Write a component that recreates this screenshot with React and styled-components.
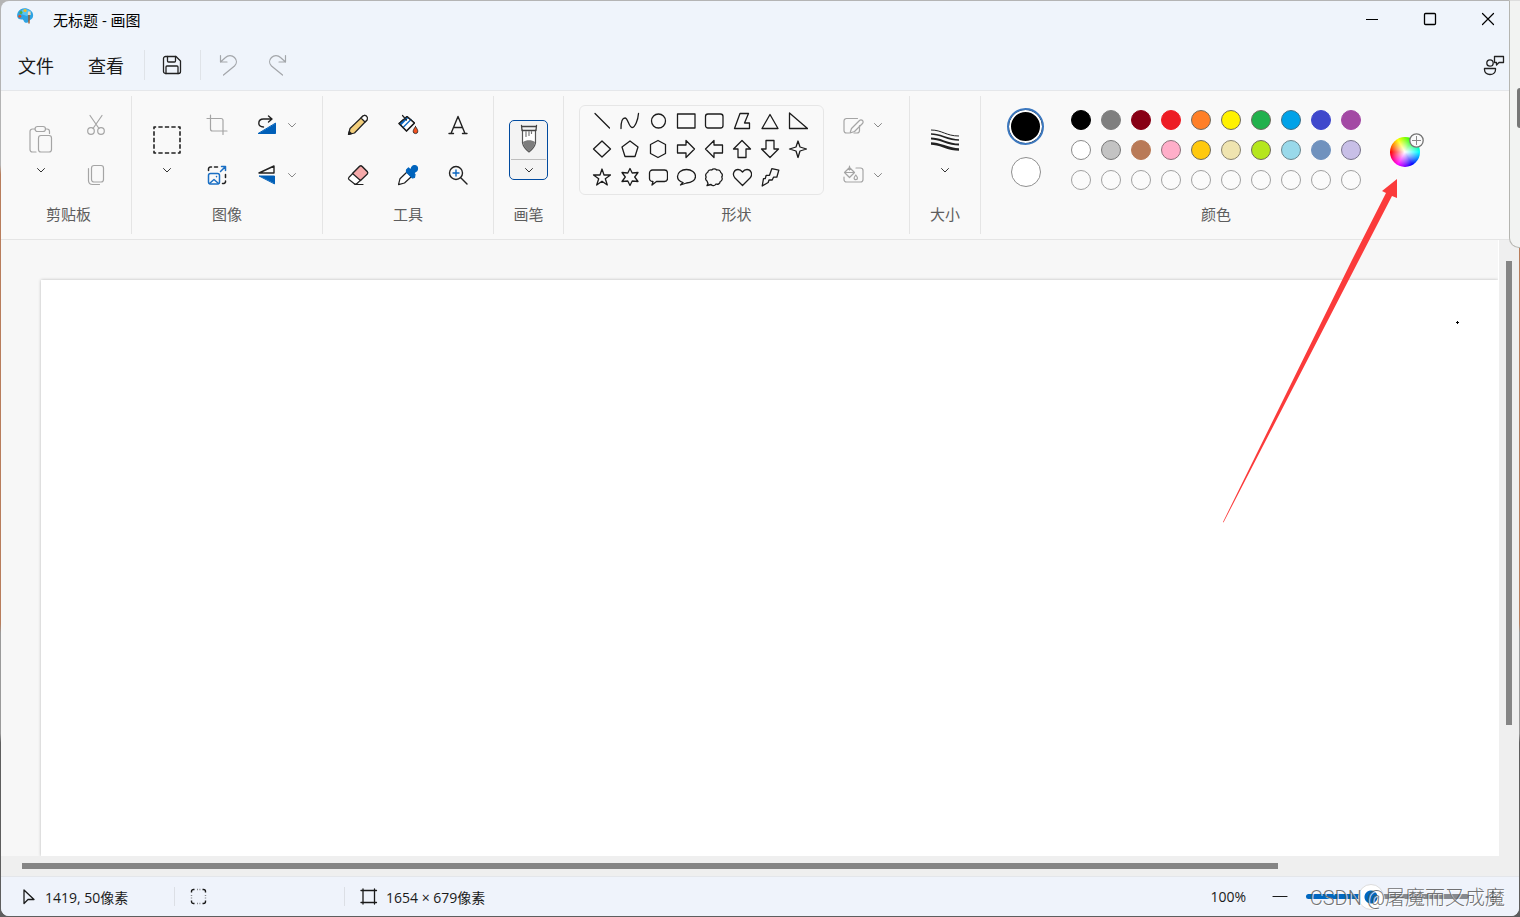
import { useState } from "react";
import styled, { createGlobalStyle } from "styled-components";

const GlobalStyle = createGlobalStyle`
  * {
    box-sizing: border-box;
  }
  body {
    margin: 0;
    overflow: hidden;
    font-family: "Open Sans", "Noto Sans CJK SC", sans-serif;
    color: #1a1a1a;
  }
  button {
    margin: 0;
    padding: 0;
    border: 0;
    background: none;
    color: inherit;
    font: inherit;
  }
`;

// What shows of the desktop around the window
const Desktop = styled.div`
  position: relative;
  display: flex;
  height: 100vh;
  padding: 1px;
  overflow: hidden;
  background: linear-gradient(
    #b4b4b4 0 18%,
    #b87d5c 19% 68%,
    #9a9a9a 69% 80%,
    #5e5e5e 81%
  );
`;

const Window = styled.div`
  flex: 1;
  min-width: 0;
  display: flex;
  flex-direction: column;
  border-radius: 8px;
  overflow: hidden;
  background: #eff4fb;
`;

// Title bar
const TitleBar = styled.header`
  display: flex;
  height: 40px;
  padding: 0 2px 0 15px;
`;

const Logo = styled.svg`
  width: 18px;
  height: 18px;
  margin-top: 6px;
`;

const Title = styled.h1`
  flex: 1;
  margin: 0 0 0 19px;
  font-size: 15px;
  font-weight: 400;
  line-height: 38px;
  color: #000;
`;

const WindowButton = styled.button`
  display: grid;
  place-items: center;
  width: 58px;
  height: 36px;
  color: #000;
`;

// Menu bar
const MenuBar = styled.nav`
  display: flex;
  align-items: center;
  height: 49px;
  padding: 0 1px 2px 0;
`;

const MenuButton = styled.button`
  width: 70px;
  height: 36px;
  font-size: 18px;
`;

const MenuDivider = styled.span`
  width: 1px;
  height: 30px;
  margin: 0 2px 0 3px;
  background: #dfe3e8;
`;

const QuickButton = styled.button`
  display: grid;
  place-items: center;
  width: 50px;
  height: 36px;
  color: ${(props) => (props.disabled ? "#a3a6aa" : "#222")};
`;

const Spacer = styled.span`
  flex: 1;
`;

// Ribbon
const Ribbon = styled.section`
  display: flex;
  height: 150px;
  padding: 5px;
  border-top: 1px solid #e5e7ea;
  border-bottom: 1px solid #e5e5e5;
  background: #f9f9f9;
`;

const Group = styled.div`
  display: flex;
  flex-direction: column;
  flex: none;
  width: ${(props) => props.$width}px;
  padding-bottom: 10px;
  border-right: ${(props) => (props.$last ? "0" : "1px solid #e5e5e5")};
`;

const GroupBody = styled.div`
  flex: 1;
  display: flex;
  align-items: center;
  justify-content: ${(props) => props.$justify || "center"};
  gap: ${(props) => props.$gap || 0}px;
  padding: 0 ${(props) => props.$pad || 0}px;
`;

const GroupLabel = styled.h2`
  margin: 0;
  font-size: 15px;
  font-weight: 400;
  line-height: 20px;
  text-align: center;
  color: #5d5d5d;
`;

const ToolGrid = styled.div`
  display: grid;
  grid-template-columns: repeat(${(props) => props.$columns}, auto);
  grid-auto-rows: 50px;
`;

const ToolButton = styled.button`
  display: grid;
  place-items: center;
  width: ${(props) => props.$width || 50}px;
  color: ${(props) => (props.disabled ? "#a5a5a5" : "#222")};
`;

const TallButton = styled.button`
  display: flex;
  flex-direction: column;
  align-items: center;
  gap: 8px;
  width: ${(props) => props.$width || 50}px;
  height: 100px;
  padding-top: 24px;
  color: ${(props) => (props.disabled ? "#a5a5a5" : "#222")};
`;

const SplitButton = styled.button`
  display: flex;
  align-items: center;
  gap: 7px;
  width: 70px;
  padding-left: 13px;
  color: ${(props) => (props.disabled ? "#a5a5a5" : "#222")};
`;

const BrushButton = styled.button`
  display: flex;
  flex-direction: column;
  align-items: center;
  justify-content: space-between;
  width: 39px;
  height: 60px;
  padding: 3px 1px;
  border: 1px solid #004a9f;
  border-radius: 5px;
  background: #f3f3f3;
`;

const BrushLine = styled.span`
  width: 100%;
  height: 1px;
  background: #bdbdbd;
`;

const ShapeBox = styled.div`
  display: grid;
  flex: none;
  grid-template-columns: repeat(8, 28px);
  grid-auto-rows: 28px;
  width: 245px;
  height: 90px;
  padding: 1px 8px;
  border: 1px solid #e6e6e6;
  border-radius: 6px;
`;

const ShapeButton = styled.button`
  display: grid;
  place-items: center;
  color: #1c1c1c;
`;

// Colours
const ActiveColors = styled.div`
  display: flex;
  flex-direction: column;
  align-items: center;
  gap: 12px;
  width: 37px;
  margin-right: 22px;
  padding-bottom: 5px;
`;

const PrimaryColor = styled.button`
  width: 37px;
  height: 37px;
  border: 2px solid #3c78bf;
  border-radius: 50%;
  background: #000;
  box-shadow: inset 0 0 0 2px #fff;
`;

const SecondaryColor = styled.button`
  width: 30px;
  height: 30px;
  border: 1px solid #8f8f8f;
  border-radius: 50%;
  background: #fff;
`;

const Palette = styled.div`
  display: grid;
  grid-template-columns: repeat(10, 30px);
  grid-auto-rows: 30px;
  place-items: center;
`;

const Swatch = styled.button`
  width: 20px;
  height: 20px;
  border: 1px solid ${(props) => props.$edge};
  border-radius: 50%;
  background: ${(props) => props.$color};
`;

const WheelButton = styled.button`
  position: relative;
  width: 34px;
  height: 34px;
  margin-left: 24px;
`;

const Wheel = styled.span`
  display: block;
  width: 30px;
  height: 30px;
  margin-top: 4px;
  border-radius: 50%;
  background:
    radial-gradient(circle, #fff, rgba(255, 255, 255, 0) 68%),
    conic-gradient(from 270deg, #f00, #ff0, #0f0, #0ff, #00f, #f0f, #f00);
`;

const WheelPlus = styled.svg`
  position: absolute;
  top: 0;
  right: 0;
  width: 15px;
  height: 15px;
`;

// Drawing area
const Workspace = styled.main`
  flex: 1;
  min-height: 0;
  display: grid;
  grid-template: 1fr 20px / 1fr 20px;
  background: #efefef;
`;

const Viewport = styled.div`
  display: flex;
  padding: 40px 0 0 40px;
  border-right: 1px solid #fff;
  overflow: hidden;
  background: #f7f7f7;
`;

const Paper = styled.div`
  position: relative;
  flex: 1;
  background: #fff;
  box-shadow: 0 0 3px rgba(0, 0, 0, 0.25);
`;

const PixelMark = styled.svg`
  position: absolute;
  top: 41px;
  right: 39px;
  width: 3px;
  height: 3px;
`;

const VerticalBar = styled.div`
  display: flex;
  justify-content: center;
  padding-top: 21px;
`;

const HorizontalBar = styled.div`
  display: flex;
  align-items: center;
  grid-column: 1 / -1;
  padding: 0 2px 0 21px;
`;

const VerticalThumb = styled.span`
  width: 6px;
  height: 78%;
  background: #858585;
`;

const HorizontalThumb = styled.span`
  width: 84%;
  height: 6px;
  background: #858585;
`;

// Status bar
const StatusBar = styled.footer`
  display: flex;
  align-items: center;
  height: 40px;
  border-top: 1px solid #e4e6ea;
  background: #eff3fb;
  font-size: 14px;
`;

const StatusItem = styled.div`
  display: flex;
  align-items: center;
  gap: 8px;
  width: ${(props) => props.$width}px;
  height: 19px;
  padding-left: ${(props) => props.$pad}px;
  border-right: ${(props) => (props.$last ? "0" : "1px solid #dcdfe5")};
  white-space: nowrap;
`;

const ZoomArea = styled.div`
  display: flex;
  align-items: center;
  margin-left: auto;
  padding-right: 14px;
`;

const ZoomButton = styled.button`
  display: grid;
  place-items: center;
  width: 24px;
  height: 30px;
`;

const ZoomValue = styled.output`
  margin-right: 22px;
`;

const ZoomSlider = styled.input`
  width: 163px;
  height: 26px;
  margin: 0 12px 0 14px;
  appearance: none;
  background: none;

  &::-webkit-slider-runnable-track {
    height: 5px;
    border-radius: 3px;
    background: linear-gradient(90deg, #0067c0 38%, #868a90 38%);
  }
  &::-webkit-slider-thumb {
    appearance: none;
    width: 26px;
    height: 26px;
    margin-top: -10px;
    border: 1px solid #dcdcdc;
    border-radius: 50%;
    background: radial-gradient(circle, #0067c0 6px, #fff 7px);
  }
`;

// Things lying over the window
const BackWindow = styled.aside`
  position: absolute;
  top: 0;
  right: -10px;
  width: 21px;
  height: 248px;
  border: 1px solid #b5b5b0;
  border-top-color: #ddd;
  border-radius: 0 0 0 10px;
  background: #f2f3f2;
`;

const BackScroll = styled.span`
  display: block;
  width: 6px;
  height: 40px;
  margin: 87px 0 0 7px;
  border-radius: 3px;
  background: #777;
`;

const Pointer = styled.svg`
  position: absolute;
  top: 178px;
  right: 122px;
  width: 176px;
  height: 346px;
  pointer-events: none;
`;

const Watermark = styled.div`
  position: absolute;
  right: 15px;
  bottom: 4px;
  font-family: Roboto, "Noto Sans CJK SC", sans-serif;
  font-size: 20px;
  font-weight: 300;
  line-height: 30px;
  color: rgba(90, 90, 90, 0.85);
  text-shadow: 1px 1px 0 rgba(255, 255, 255, 0.8);
  pointer-events: none;
`;

const Svg = styled.svg`
  display: block;
  flex: none;
  fill: none;
  stroke: ${(props) => props.$tone};
  stroke-linecap: round;
  stroke-linejoin: round;
`;

function Icon({ w = 24, h = 24, line = 1.2, tone = "currentColor", children }) {
  return (
    <Svg width={w} height={h} viewBox={`0 0 ${w} ${h}`} strokeWidth={line} $tone={tone} aria-hidden="true">
      {children}
    </Svg>
  );
}

const Chevron = ({ tone = "#333" }) => (
  <Icon w={12} h={12} line={1} tone={tone}>
    <path d="M2.5 4.5 6 8l3.5-3.5" />
  </Icon>
);

const shapes = [
  ["直线", <path d="M3 2.5l14.500 14.500" />],
  ["曲线", <path d="M1 17.5C1 11 2 7 5 7s4 9.500 7 9.500S18 9 18.500 2.500" />],
  ["椭圆形", <circle cx="10.5" cy="10" r="7" />],
  ["矩形", <path d="M1.5 3H19v14H1.5z" />],
  ["圆角矩形", <rect x="1.5" y="3" width="17.5" height="14" rx="2.5" />],
  ["多边形", <path d="M8 2.5h8.500L12.500 12h5v5.500h-15z" />],
  ["三角形", <path d="M10 3.500l8 14H2z" />],
  ["直角三角形", <path d="M1.500 2v15.500h18z" />],
  ["菱形", <path d="M10 2l8.500 8-8.500 8-8.500-8z" />],
  ["五边形", <path d="M10 2l8 6-3 9.500H5L2 8z" />],
  ["六边形", <path d="M10 1.500l7.500 4v9l-7.500 4-7.500-4v-9z" />],
  ["右箭头", <path d="M1.500 6H10V1.500l8.500 8.500-8.500 8.500V14H1.500z" />],
  ["左箭头", <path d="M18.500 6H10V1.500L1.500 10l8.500 8.500V14h8.500z" />],
  ["向上箭头", <path d="M6 18.500V10H1.500L10 1.500l8.500 8.500H14v8.500z" />],
  ["向下箭头", <path d="M6 1.500V10H1.500l8.500 8.500 8.500-8.500H14V1.500z" />],
  ["四角星", <path d="M10 2l2 6 6.500 2-6.500 2-2 6.500L8 12l-6.500-2L8 8z" />],
  ["五角星", <path d="M10 2l2 6h6.500l-5.200 3.700 2 6.300L10 14.200 4.700 18l2-6.300L1.500 8H8z" />],
  ["六角星", <path d="M10 1.500L12.200 6l5.800-.5-3.300 4.500 3.300 4.500-5.800-.5-2.200 4.500L7.800 14l-5.800.5L5.300 10 2 5.500l5.800.5z" />],
  ["圆角矩形标注", <path d="M4.500 3h12a3 3 0 013 3v5.500a3 3 0 01-3 3h-8L4 18l1-3.500h-.500a3 3 0 01-3-3V6a3 3 0 013-3z" />],
  ["椭圆形标注", <path d="M7 15.500c-3-1-5.500-3-5.500-6 0-4 4-7 9-7s9 3 9 6.800-4 6.700-9 6.700l-6 2z" />],
  [
    "云形标注",
    <path d="M3 14a3 3 0 01-.8-4 3 3 0 011.500-4.500 3 3 0 014-2.500 3.200 3.200 0 015 0 3 3 0 014 2.500 3 3 0 011 4.500 3 3 0 01-1.500 4.500 3 3 0 01-4.200 2.500 3 3 0 01-5 .5L3 18.500l1-2z" />,
  ],
  ["心形", <path d="M10.500 18.500L3 11C-.500 7 2.500 2.500 6 2.500c2 0 3.500 1.200 4.500 2.500 1-1.300 2.500-2.500 4.500-2.500 3.500 0 6.500 4.500 3 8.500z" />],
  ["闪电形", <path d="M11.800 1.700l7 1.500-2 7h-3.300L12.200 13H9l-.8 2.500-6 3.500 1.300-7.300h1.700l1-3.400h3.300z" />],
];

// [name, colour, edge]
const dark = "#6f6a5e";
const palette = [
  ["黑色", "#000000", "#000000"],
  ["灰色-50%", "#7f7f7f", "#7f7f7f"],
  ["深红色", "#880015", "#880015"],
  ["红色", "#ed1c24", "#ed1c24"],
  ["橙色", "#ff7f27", dark],
  ["黄色", "#fff200", dark],
  ["绿色", "#22b14c", dark],
  ["青绿色", "#00a2e8", "#3f6f86"],
  ["靛青色", "#3f48cc", "#3f48cc"],
  ["紫色", "#a349a4", "#a349a4"],
  ["白色", "#ffffff", "#8a8a8a"],
  ["灰色-25%", "#c3c3c3", "#777777"],
  ["褐色", "#b97a57", "#b97a57"],
  ["玫瑰色", "#ffaec9", "#8b7078"],
  ["金色", "#ffc90e", dark],
  ["浅黄色", "#efe4b0", "#88836f"],
  ["酸橙色", "#b5e61d", dark],
  ["淡青绿色", "#99d9ea", "#6b868d"],
  ["蓝灰色", "#7092be", "#7092be"],
  ["淡紫色", "#c8bfe7", "#77738a"],
];

function TitleRow() {
  return (
    <TitleBar>
      <Logo viewBox="0 0 18 18" aria-hidden="true">
        <path
          d="M2 5C4 1 10 0 14 3c3 2 4 5 2.500 8-1 2-3 1.500-3.500 3-.5 2-4 2.500-5 .5-.7-1.500-.5-2-2.500-2C1.500 12.500 0 9 2 5z"
          fill="#2ea3e3"
        />
        <path d="M6 3c3-1.500 7-1 9 2l-4 4-6-2z" fill="#58c3f2" />
        <circle cx="9" cy="3.5" r="1.6" fill="#f5b81f" />
        <circle cx="5" cy="5.5" r="1.5" fill="#4bb04a" />
        <circle cx="3.8" cy="9.3" r="1.5" fill="#d8552d" />
        <path d="M13 7v9.500" stroke="#9a5b2b" strokeWidth="1.4" />
        <path d="M12 4.500h2.500l.3 3.500h-3z" fill="#ead7b6" />
      </Logo>
      <Title>无标题 - 画图</Title>
      <WindowButton aria-label="最小化">
        <Icon w={14} h={14}>
          <path d="M1 7.5h12" strokeLinecap="butt" />
        </Icon>
      </WindowButton>
      <WindowButton aria-label="最大化">
        <Icon w={14} h={14} line={1.3}>
          <rect x="1.5" y="1.5" width="11" height="11" rx="1" />
        </Icon>
      </WindowButton>
      <WindowButton aria-label="关闭">
        <Icon w={14} h={14}>
          <path d="M1.5 1.5l11 11M12.5 1.5l-11 11" />
        </Icon>
      </WindowButton>
    </TitleBar>
  );
}

function MenuRow() {
  return (
    <MenuBar>
      <MenuButton>文件</MenuButton>
      <MenuButton>查看</MenuButton>
      <MenuDivider />
      <QuickButton aria-label="保存">
        <Icon w={20} h={20} line={1.3}>
          <path d="M3.5 1.5H14l4.500 4.500v10.500a2 2 0 01-2 2h-13a2 2 0 01-2-2v-13a2 2 0 012-2z" />
          <path d="M5.5 1.5V6a1 1 0 001 1h6a1 1 0 001-1V1.500M4 18.500V12a1 1 0 011-1h10a1 1 0 011 1v6.500" />
        </Icon>
      </QuickButton>
      <MenuDivider />
      <QuickButton aria-label="撤消" disabled>
        <Icon h={22}>
          <path d="M4.500 1.500V8H11M4.500 8l5-4.500C12 1 16 1 18.500 3.500s2.500 6 0 8.500L7.500 21" />
        </Icon>
      </QuickButton>
      <QuickButton aria-label="重做" disabled>
        <Icon h={22}>
          <path d="M19.500 1.500V8H13M19.500 8l-5-4.500C12 1 8 1 5.500 3.500S3 9.500 5.500 12l11 9" />
        </Icon>
      </QuickButton>
      <Spacer />
      <QuickButton aria-label="反馈">
        <Icon line={1.3}>
          <circle cx="9" cy="10" r="3.2" />
          <path d="M3.500 15.500h11v1.200c0 3-2.500 4.800-5.500 4.800s-5.500-1.800-5.500-4.800z" />
          <path d="M13.500 3.500h9v6H18L15.500 12V9.500h-2z" />
        </Icon>
      </QuickButton>
    </MenuBar>
  );
}

function ClipboardGroup() {
  return (
    <Group $width={126}>
      <GroupBody>
        <TallButton $width={55} aria-label="粘贴" disabled>
          <Icon w={28} h={32}>
            <rect x="8" y="2.5" width="10.5" height="5" rx="2.5" />
            <path d="M8 5H5.500A2.500 2.500 0 003 7.500v18A2.500 2.500 0 005.500 28H9M18.500 5H20a2.500 2.500 0 012.500 2.500v2" />
            <rect x="11.5" y="11.5" width="13" height="16.5" rx="2.5" />
          </Icon>
          <Chevron />
        </TallButton>
        <ToolGrid $columns={1}>
          <ToolButton $width={55} aria-label="剪切" disabled>
            <Icon>
              <path d="M6 2.500l9 13M18 2.500l-9 13" />
              <circle cx="7" cy="18" r="3.3" />
              <circle cx="17" cy="18" r="3.3" />
            </Icon>
          </ToolButton>
          <ToolButton $width={55} aria-label="复制" disabled>
            <Icon>
              <rect x="7.5" y="2.5" width="12" height="16.5" rx="2.5" />
              <path d="M4.500 5.500V18a4 4 0 004 3.500h7" />
            </Icon>
          </ToolButton>
        </ToolGrid>
      </GroupBody>
      <GroupLabel>剪贴板</GroupLabel>
    </Group>
  );
}

function ImageGroup() {
  return (
    <Group $width={191}>
      <GroupBody>
        <TallButton aria-label="选择">
          <Icon w={28} h={32} line={1.6}>
            <rect
              x="1"
              y="3"
              width="26"
              height="26"
              strokeDasharray="4.3 2.2"
              strokeDashoffset="2.15"
              strokeLinecap="butt"
            />
          </Icon>
          <Chevron />
        </TallButton>
        <ToolGrid $columns={2}>
          <ToolButton aria-label="裁剪" disabled>
            <Icon>
              <path d="M5.500 2v14a2 2 0 002 2H22M2 5.500h14a2 2 0 012 2v14" />
            </Icon>
          </ToolButton>
          <SplitButton aria-label="旋转">
            <Icon line={1.4}>
              <path d="M20.500 10.500v10h-17z" fill="#005fb8" stroke="#005fb8" strokeWidth="1" />
              <path d="M8.500 14C5 14 3.800 12 3.800 10.200 3.800 7.500 6 6 8.500 6h8M13.500 3l3.500 3-3.500 3" />
            </Icon>
            <Chevron tone="#888" />
          </SplitButton>
          <ToolButton aria-label="重设大小和倾斜">
            <Icon line={1.5}>
              <path d="M3.500 7.500V6a2 2 0 012-2h1M9.500 4h3M20.500 11.500v3M20.500 18v1a2 2 0 01-1.500 1.500h-1.500" />
              <g stroke="#1a6fc4">
                <path d="M15.500 8.500l5-5M16.500 3.500h4v4" />
                <rect x="3.5" y="10.5" width="11" height="10.5" rx="2" />
                <path d="M4.500 20.500l4.500-4 4.500 4M11.500 13.500v.2" />
              </g>
            </Icon>
          </ToolButton>
          <SplitButton aria-label="翻转">
            <Icon line={1.4}>
              <path d="M4 10l15-7v7z" />
              <path d="M4.500 13h15v7.500z" fill="#005fb8" stroke="#005fb8" strokeWidth="1" />
            </Icon>
            <Chevron tone="#888" />
          </SplitButton>
        </ToolGrid>
      </GroupBody>
      <GroupLabel>图像</GroupLabel>
    </Group>
  );
}

function ToolsGroup() {
  return (
    <Group $width={171}>
      <GroupBody>
        <ToolGrid $columns={3}>
          <ToolButton aria-label="铅笔">
            <Icon>
              <path d="M2.500 21.500l1.500-6L17 3a2.900 2.900 0 014 4L8.500 20z" fill="#f3cf7c" />
              <path d="M15 5l2-2a2.900 2.900 0 014 4l-2 2z" fill="#fff" />
              <path d="M2.500 21.500l.8-3 2.200 2.200z" fill="#222" />
            </Icon>
          </ToolButton>
          <ToolButton aria-label="填充">
            <Icon>
              <path d="M3 10.500l8-7 7.500 6.500-8 8z" fill="#fff" />
              <path d="M3 10.500l8-7 1.500 1.300-7.500 7.700z" fill="#0a66c0" stroke="none" />
              <path d="M7 14.500l8-8" stroke="#0a66c0" />
              <path d="M3 10.500l8-7 7.500 6.500-8 8zM6.500 2.500l4 4.500" />
              <path
                d="M19.500 13.500c1.500 2.200 2.300 3.500 2.300 4.800a2.300 2.300 0 01-4.600 0c0-1.300.8-2.600 2.300-4.800z"
                fill="#f4511e"
                strokeWidth=".8"
              />
            </Icon>
          </ToolButton>
          <ToolButton aria-label="文本">
            <Icon line={1.4}>
              <path d="M5 20.500l7-17 7 17M7.500 14.500h9M3 20.500h4.500M16.500 20.500H21" />
            </Icon>
          </ToolButton>
          <ToolButton aria-label="橡皮擦">
            <Icon>
              <path
                d="M2.800 14.500l10.700-11a1.800 1.800 0 012.600 0l5 5a1.800 1.800 0 010 2.600L11 20.500a2 2 0 01-3 0l-5-4a1.500 1.500 0 01-.2-2z"
                fill="#fff"
              />
              <path d="M6.500 10.500l7-7a1.800 1.800 0 012.600 0l5 5a1.800 1.800 0 010 2.600l-6.600 6.400z" fill="#f5a9a9" />
              <path d="M9 21.500h8" />
            </Icon>
          </ToolButton>
          <ToolButton aria-label="颜色选取器">
            <Icon>
              <path d="M11 9l4.500 4.500-7 6.500-6 1.700 1.500-6z" fill="#fff" />
              <g fill="#0064bd" stroke="#0064bd">
                <circle cx="18.5" cy="5.5" r="3" />
                <path d="M10.500 7l2-2 6.500 6.500-.5 3-2 .5-6-6z" />
                <path d="M14 7l3-3 3.500 3.500-3 3z" />
              </g>
            </Icon>
          </ToolButton>
          <ToolButton aria-label="放大镜">
            <Icon line={1.4}>
              <circle cx="10" cy="10" r="6.5" />
              <path d="M15 15l6 6" />
              <path d="M7 10h6M10 7v6" stroke="#0a66c0" />
            </Icon>
          </ToolButton>
        </ToolGrid>
      </GroupBody>
      <GroupLabel>工具</GroupLabel>
    </Group>
  );
}

function BrushGroup() {
  return (
    <Group $width={70}>
      <GroupBody>
        <BrushButton aria-label="画笔">
          <Icon w={20} h={30}>
            <path d="M3.500 6v13c1 4 4 7 6.500 9 2.500-2 5.500-5 6.500-9V6" fill="#fff" stroke="#555" />
            <path d="M4 18c3-2.500 9-2.500 12 0-.5 4.500-3.500 7.500-6 9.500-2.500-2-5.500-5-6-9.500z" fill="#7d7d7d" stroke="none" />
            <path d="M2.500 1.500l.5 5h14l.5-5M3 2.500h14" stroke="#444" strokeWidth="1.3" />
            <path d="M7 7.500v5M10 7.500v4M12.500 7.500v2" stroke="#777" />
          </Icon>
          <BrushLine />
          <Chevron />
        </BrushButton>
      </GroupBody>
      <GroupLabel>画笔</GroupLabel>
    </Group>
  );
}

function ShapesGroup() {
  return (
    <Group $width={346}>
      <GroupBody $justify="flex-start" $gap={4} $pad={15}>
        <ShapeBox>
          {shapes.map(([name, drawing]) => (
            <ShapeButton key={name} aria-label={name}>
              <Icon w={20} h={20} line={1.3}>
                {drawing}
              </Icon>
            </ShapeButton>
          ))}
        </ShapeBox>
        <ToolGrid $columns={1}>
          <SplitButton aria-label="形状轮廓" disabled>
            <Icon>
              <path d="M16.500 5.500h-11A2.500 2.500 0 003 8v9.500A2.500 2.500 0 005.500 20H8M18.500 12.500v5A2.500 2.500 0 0116 20h-3" />
              <path d="M9 20l1.500-4.500 8-8a2 2 0 013 3l-8 8z" />
            </Icon>
            <Chevron tone="#888" />
          </SplitButton>
          <SplitButton aria-label="形状填充" disabled>
            <Icon>
              <path d="M15 5h4.500A2.500 2.500 0 0122 7.500v9a2.500 2.500 0 01-2.500 2.500h-14A2.500 2.500 0 013 16.500V14" />
              <path d="M8.500 3v4M8.500 4.500l5 5-5 5-5-5zM4 9.500h9M14.800 12c1.200 1.500 1.700 2.200 1.700 3a1.700 1.700 0 01-3.400 0c0-.8.5-1.500 1.700-3z" />
            </Icon>
            <Chevron tone="#888" />
          </SplitButton>
        </ToolGrid>
      </GroupBody>
      <GroupLabel>形状</GroupLabel>
    </Group>
  );
}

function SizeGroup() {
  return (
    <Group $width={71}>
      <GroupBody>
        <TallButton aria-label="大小">
          <Icon w={28} h={32}>
            <g strokeLinecap="butt">
              <path d="M0 6c11 0 15 6 28 6" strokeWidth="1" />
              <path d="M0 10c11 0 15 6 28 6" strokeWidth="1.6" />
              <path d="M0 14.500c11 0 15 6 28 6" strokeWidth="2" />
              <path d="M0 19.500c11 0 15 6 28 6" strokeWidth="2.6" />
            </g>
          </Icon>
          <Chevron />
        </TallButton>
      </GroupBody>
      <GroupLabel>大小</GroupLabel>
    </Group>
  );
}

function ColorsGroup() {
  return (
    <Group $width={470} $last>
      <GroupBody $justify="flex-start" $pad={26}>
        <ActiveColors>
          <PrimaryColor aria-label="颜色 1" />
          <SecondaryColor aria-label="颜色 2" />
        </ActiveColors>
        <Palette>
          {palette.map(([name, color, edge]) => (
            <Swatch key={name} aria-label={name} $color={color} $edge={edge} />
          ))}
          {Array.from({ length: 10 }, (_, i) => (
            <Swatch key={i} aria-label="自定义颜色" $color="#fbfbfb" $edge="#a0a0a0" />
          ))}
        </Palette>
        <WheelButton aria-label="编辑颜色">
          <Wheel />
          <WheelPlus viewBox="0 0 15 15" aria-hidden="true">
            <circle cx="7.5" cy="7.5" r="6.7" fill="#fafafa" stroke="#757575" strokeWidth="1.3" />
            <path d="M3 7.5h9M7.5 3v9" stroke="#8a8a8a" />
          </WheelPlus>
        </WheelButton>
      </GroupBody>
      <GroupLabel>颜色</GroupLabel>
    </Group>
  );
}

function Status() {
  const [zoom, setZoom] = useState(38);

  return (
    <StatusBar>
      <StatusItem $width={174} $pad={20}>
        <Icon w={16} h={20} line={1.3}>
          <path d="M3 3v13.500l4-4h6z" />
        </Icon>
        <span>1419, 50像素</span>
      </StatusItem>
      <StatusItem $width={170} $pad={15}>
        <Icon w={18} h={18} line={1.4}>
          <path
            d="M1.500 4.500v-1a2 2 0 012-2h1M12.500 1.500h1a2 2 0 012 2v1M15.500 12.500v1a2 2 0 01-2 2h-1M4.500 15.500h-1a2 2 0 01-2-2v-1M7 1.500h.5M9.700 1.500h.5M7 15.500h.5M9.700 15.500h.5M1.500 7v.5M1.500 9.700v.5M15.500 7v.5M15.500 9.700v.5"
            strokeLinecap="butt"
          />
        </Icon>
      </StatusItem>
      <StatusItem $width={170} $pad={15} $last>
        <Icon w={18} h={18} line={1.3}>
          <path d="M3 1v15M14.500 1v15M1 2.500h15.500M1 14.500h15.500" />
        </Icon>
        <span>1654 × 679像素</span>
      </StatusItem>
      <ZoomArea>
        <ZoomValue htmlFor="zoom">100%</ZoomValue>
        <ZoomButton aria-label="缩小">
          <Icon w={16} h={16}>
            <path d="M1 7.5h14" />
          </Icon>
        </ZoomButton>
        <ZoomSlider
          id="zoom"
          type="range"
          aria-label="缩放"
          value={zoom}
          onChange={(e) => setZoom(Number(e.target.value))}
        />
        <ZoomButton aria-label="放大">
          <Icon w={16} h={16}>
            <path d="M1 8h14M8 1v14" />
          </Icon>
        </ZoomButton>
      </ZoomArea>
    </StatusBar>
  );
}

export default function App() {
  return (
    <>
      <GlobalStyle />
      <Desktop>
        <Window>
          <TitleRow />
          <MenuRow />
          <Ribbon>
            <ClipboardGroup />
            <ImageGroup />
            <ToolsGroup />
            <BrushGroup />
            <ShapesGroup />
            <SizeGroup />
            <ColorsGroup />
          </Ribbon>
          <Workspace>
            <Viewport>
              <Paper>
                <PixelMark viewBox="0 0 3 3">
                  <path d="M1.5 0v3M0 1.5h3" stroke="#000" />
                </PixelMark>
              </Paper>
            </Viewport>
            <VerticalBar>
              <VerticalThumb />
            </VerticalBar>
            <HorizontalBar>
              <HorizontalThumb />
            </HorizontalBar>
          </Workspace>
          <Status />
        </Window>
        <BackWindow>
          <BackScroll />
        </BackWindow>
        <Pointer viewBox="0 0 176 346" aria-hidden="true">
          <path d="M1 344L130 82l34-67-4-2L175 1v19l-5-2-33 64L1.500 344.500z" fill="#fb3b3b" />
        </Pointer>
        <Watermark>CSDN @屠魔而又成魔</Watermark>
      </Desktop>
    </>
  );
}
